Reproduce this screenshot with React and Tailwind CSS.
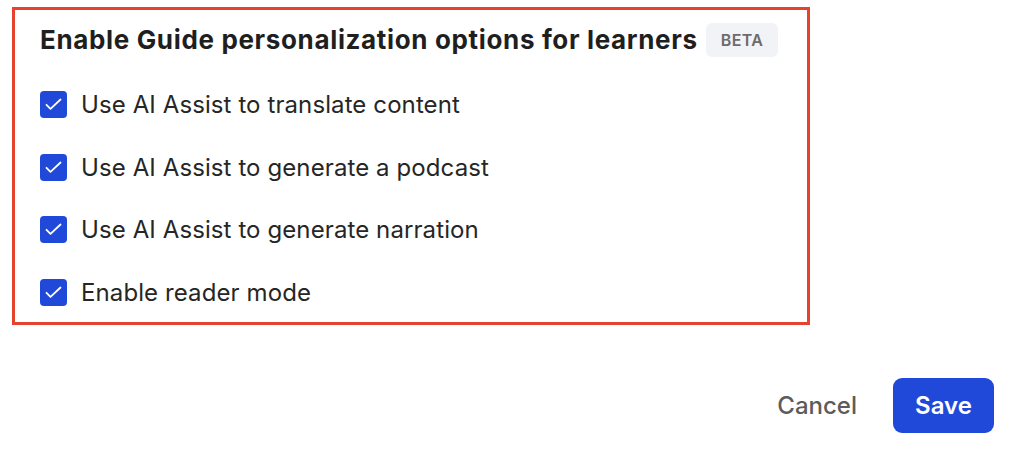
import React from 'react'

const options = [
  'Use AI Assist to translate content',
  'Use AI Assist to generate a podcast',
  'Use AI Assist to generate narration',
  'Enable reader mode',
]

const CheckBox = () => (
  <span className="w-[27px] h-[27px] rounded-[4px] bg-[#2149d9] flex shrink-0">
    <svg width="27" height="27" viewBox="0 0 27 27" fill="none">
      <path d="M6.5 13.8l4 4L20.5 8.5" stroke="white" strokeWidth="1.8" strokeLinecap="round" strokeLinejoin="round" />
    </svg>
  </span>
)

export default function App() {
  return (
    <div className="w-[1024px] h-[450px] bg-white font-['Inter',sans-serif] text-[#222]">
      <div className="pt-[7px] pl-[12px]">
        <div className="w-[798px] h-[318px] border-[3px] border-[#e5432d] pl-[25px] pt-[13px]">
          <div className="flex items-center gap-[8px]">
            <h2 className="text-[26px] leading-[32px] font-bold text-[#1f1f1f] tracking-[0.65px]">
              Enable Guide personalization options for learners
            </h2>
            <span className="h-[34px] px-[15px] flex items-center rounded-[6px] bg-[#f2f3f6] text-[16px] font-semibold text-[#6b6b6b] tracking-[0.4px]">
              BETA
            </span>
          </div>
          <div className="mt-[34px] flex flex-col gap-[35.5px]">
            {options.map((label) => (
              <label key={label} className="flex items-center gap-[14px]">
                <CheckBox />
                <span className="text-[24px] leading-[27px] text-[#262626] tracking-[0.1px]">{label}</span>
              </label>
            ))}
          </div>
        </div>
      </div>
      <div className="flex justify-end items-center gap-[36px] pr-[30px] mt-[53px]">
        <button className="text-[24px] font-medium text-[#5c5c5c]">Cancel</button>
        <button className="w-[101px] h-[55px] rounded-[9px] bg-[#2149d9] text-white text-[24px] font-semibold">
          Save
        </button>
      </div>
    </div>
  )
}
